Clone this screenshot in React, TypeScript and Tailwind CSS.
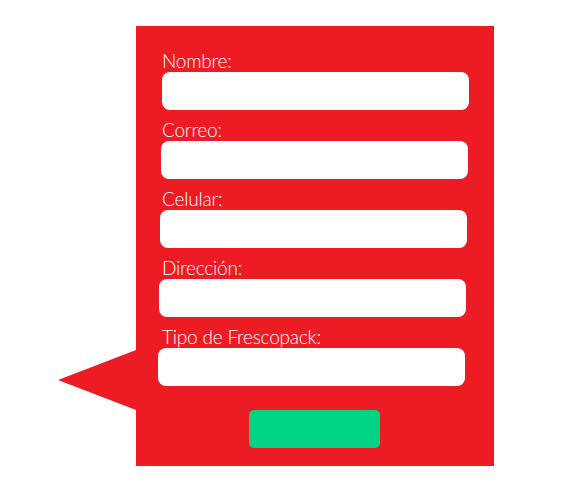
import React from 'react';

const fields = [
  { label: 'Nombre:', shift: 'ml-0' },
  { label: 'Correo:', shift: '-ml-px' },
  { label: 'Celular:', shift: '-ml-[2px]' },
  { label: 'Dirección:', shift: '-ml-[3px]' },
  { label: 'Tipo de Frescopack:', shift: '-ml-[4px]' },
];

export default function App() {
  return (
    <div className="w-[576px] h-[504px] bg-white flex items-start pl-[58px] pt-[26px] font-['Lato',sans-serif]">
      {/* speech-bubble pointer */}
      <svg width="78" height="60" viewBox="0 0 78 60" className="mt-[324px] shrink-0">
        <polygon points="0,30 78,0 78,60" fill="#ed1c24" />
      </svg>

      <form className="w-[358px] h-[440px] bg-[#ed1c24] pt-[15px] pl-[26px] flex flex-col">
        {fields.map((f) => (
          <div key={f.label} className="flex flex-col">
            <label className="h-[31px] flex items-end text-white text-[19px] leading-[22px] font-light tracking-[-0.2px]">
              {f.label}
            </label>
            <input
              type="text"
              className={`${f.shift} w-[307px] h-[38px] rounded-[8px] bg-white outline-none`}
            />
          </div>
        ))}
        <div className="flex justify-center pr-[28px] mt-[24px]">
          <button type="submit" className="w-[131px] h-[38px] rounded-[5px] bg-[#00d484]" />
        </div>
      </form>
    </div>
  );
}
